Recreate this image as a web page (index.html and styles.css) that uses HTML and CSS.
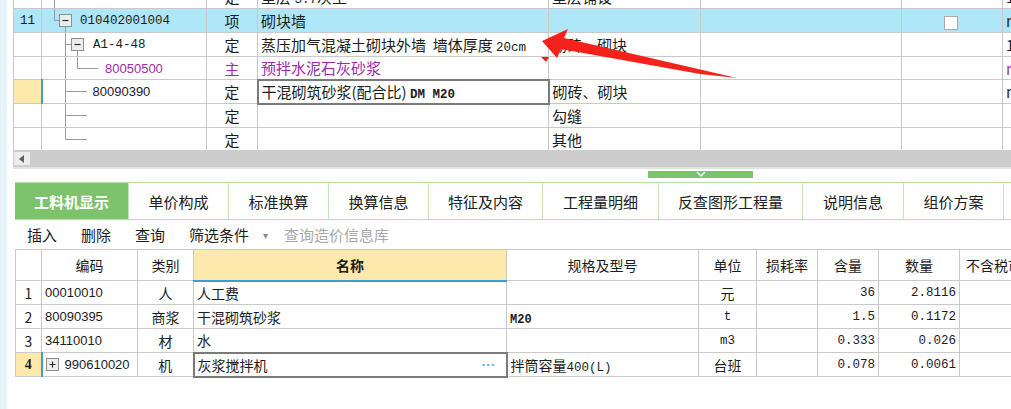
FILE: index.html
```html
<!DOCTYPE html>
<html lang="zh-CN">
<head>
<meta charset="utf-8">
<title>工料机显示</title>
<link rel="stylesheet" href="styles.css">
</head>
<body>
<div class="app">
  <div class="edge"></div>
  <div class="main">
    <div class="upper">
      <table class="grid top">
        <colgroup>
          <col class="t1"><col class="t2"><col class="t3"><col class="t4"><col class="t5"><col class="t6"><col class="t7"><col class="t8">
        </colgroup>
        <tr class="r24">
          <td class="num"></td>
          <td class="tree"><div class="tr"><svg width="51" height="23"><path class="ln" d="M12.5 0V23"/></svg><span class="mono">A1-4-125</span></div></td>
          <td class="c">定</td>
          <td>垫层 <span class="mono">3:7</span>灰土</td>
          <td>垫层铺设</td>
          <td></td><td></td>
          <td class="last">1</td>
        </tr>
        <tr class="r24 sel">
          <td class="num c mono">11</td>
          <td class="tree"><div class="tr"><svg width="38" height="23"><path class="ln" d="M12.5 0V11.5H17.5M23.5 17.5V23"/><rect class="bx" x="17.5" y="5.5" width="12" height="12"/><path class="mk" d="M20.5 11.5H26.5"/></svg><span class="mono">010402001004</span></div></td>
          <td class="c">项</td>
          <td>砌块墙</td>
          <td></td><td></td>
          <td class="c"><span class="chk"></span></td>
          <td class="last">m</td>
        </tr>
        <tr class="r24">
          <td class="num"></td>
          <td class="tree"><div class="tr"><svg width="51" height="23"><path class="ln" d="M23.5 0V23M23.5 11.5H29.5M35.5 17.5V23"/><rect class="bx" x="29.5" y="5.5" width="12" height="12"/><path class="mk" d="M32.5 11.5H38.5"/></svg><span class="mono">A1-4-48</span></div></td>
          <td class="c">定</td>
          <td>蒸压加气混凝土砌块外墙&nbsp; 墙体厚度 <span class="mono">20cm</span></td>
          <td>砌砖、砌块</td>
          <td></td><td></td>
          <td class="last">1</td>
        </tr>
        <tr class="r23 purple">
          <td class="num"></td>
          <td class="tree"><div class="tr"><svg width="63" height="22"><path class="ln" d="M23.5 0V22M35.5 0V11.5H56"/></svg><span class="sans">80050500</span></div></td>
          <td class="c">主</td>
          <td>预拌水泥石灰砂浆</td>
          <td></td><td></td><td></td>
          <td class="last">m</td>
        </tr>
        <tr class="r24">
          <td class="num cur"></td>
          <td class="tree bar"><div class="tr"><svg width="50" height="23"><path class="ln" d="M22.5 0V23M22.5 11.5H44"/></svg><span class="sans">80090390</span></div></td>
          <td class="c">定</td>
          <td class="edit">干混砌筑砂浆(配合比) <span class="mono b">DM M20</span></td>
          <td>砌砖、砌块</td>
          <td></td><td></td>
          <td class="last">m</td>
        </tr>
        <tr class="r24">
          <td class="num"></td>
          <td class="tree"><div class="tr"><svg width="51" height="23"><path class="ln" d="M23.5 0V23M23.5 11.5H45"/></svg></div></td>
          <td class="c">定</td>
          <td></td>
          <td>勾缝</td>
          <td></td><td></td><td class="last"></td>
        </tr>
        <tr class="r23">
          <td class="num"></td>
          <td class="tree"><div class="tr"><svg width="51" height="22"><path class="ln" d="M23.5 0V11.5H45"/></svg></div></td>
          <td class="c">定</td>
          <td></td>
          <td>其他</td>
          <td></td><td></td><td class="last"></td>
        </tr>
      </table>
    </div>

    <div class="hscroll"><div class="hs-btn"><svg width="6" height="8"><path d="M5 0V8L0 4Z" fill="#606060"/></svg></div></div>

    <div class="splitter">
      <div class="grip"><svg width="10" height="6"><path d="M1 1L5 5L9 1" fill="none" stroke="#fff" stroke-width="1.4"/></svg></div>
    </div>

    <div class="tabs">
      <div class="tab active w114">工料机显示</div>
      <div class="tab w100">单价构成</div>
      <div class="tab w100">标准换算</div>
      <div class="tab w100">换算信息</div>
      <div class="tab w114">特征及内容</div>
      <div class="tab w116">工程量明细</div>
      <div class="tab w144">反查图形工程量</div>
      <div class="tab w101">说明信息</div>
      <div class="tab w100">组价方案</div>
      <div class="tab-rest"></div>
    </div>

    <div class="toolbar">
      <span class="tb">插入</span>
      <span class="tb">删除</span>
      <span class="tb">查询</span>
      <span class="tb">筛选条件</span>
      <span class="drop">▾</span>
      <span class="tb dis">查询造价信息库</span>
    </div>

    <table class="grid bottom">
      <colgroup>
        <col class="b1"><col class="b2"><col class="b3"><col class="b4"><col class="b5"><col class="b6"><col class="b7"><col class="b8"><col class="b9"><col class="b10">
      </colgroup>
      <tr class="head">
        <th></th><th>编码</th><th>类别</th><th class="hl">名称</th><th>规格及型号</th><th>单位</th><th>损耗率</th><th>含量</th><th>数量</th><th class="lft">不含税市场价</th>
      </tr>
      <tr>
        <td class="c">1</td><td class="sans">00010010</td><td class="c">人</td><td>人工费</td><td></td><td class="c">元</td><td></td><td class="r mono">36</td><td class="r mono">2.8116</td><td></td>
      </tr>
      <tr>
        <td class="c">2</td><td class="sans">80090395</td><td class="c">商浆</td><td>干混砌筑砂浆</td><td class="spec"><span class="mono b">M20</span></td><td class="c mono">t</td><td></td><td class="r mono">1.5</td><td class="r mono">0.1172</td><td></td>
      </tr>
      <tr>
        <td class="c">3</td><td class="sans">34110010</td><td class="c">材</td><td>水</td><td></td><td class="c mono">m3</td><td></td><td class="r mono">0.333</td><td class="r mono">0.026</td><td></td>
      </tr>
      <tr>
        <td class="c cur bold4">4</td>
        <td class="bar"><div class="code"><svg width="22" height="14"><rect class="bx" x="3.5" y="0.5" width="12" height="12"/><path class="mk" d="M6.5 6.5H12.5M9.5 3.5V9.5"/></svg><span class="sans">990610020</span></div></td>
        <td class="c">机</td>
        <td class="edit"><div class="ed"><span>灰浆搅拌机</span><span class="dots">...</span></div></td>
        <td>拌筒容量<span class="mono">400(L)</span></td>
        <td class="c">台班</td><td></td>
        <td class="r mono">0.078</td><td class="r mono">0.0061</td><td></td>
      </tr>
    </table>
  </div>

  <svg class="overlay" width="1011" height="409">
    <polygon points="541,57 549,57 546,62" fill="#ee1d1d"/>
    <polygon points="542,41 568,29 564,38 737,78 700,74 561,49 557,58" fill="#f5221b"/>
  </svg>
</div>
</body>
</html>
```

FILE: styles.css
```css
* { box-sizing: border-box; }
html, body { margin: 0; padding: 0; }
body {
  width: 1011px;
  height: 409px;
  overflow: hidden;
  background: #fff;
  color: #1c1c1c;
  font-family: "Noto Sans CJK SC", sans-serif;
}
.app { position: relative; display: flex; height: 409px; }
.edge { flex: none; width: 7px; background: #e7f3fa; }
.main {
  flex: 1;
  min-width: 0;
  margin-left: 6px;
  overflow: hidden;
  display: flex;
  flex-direction: column;
}

.mono { font-family: "Liberation Mono", "Noto Sans CJK SC", monospace; font-size: 12.5px; }
.sans { font-family: "Liberation Sans", sans-serif; font-size: 13px; }
.b { font-weight: bold; }

/* grids */
.grid { border-collapse: collapse; table-layout: fixed; }
.grid td, .grid th {
  border: 1px solid #c9c9c9;
  padding: 0 3px;
  white-space: nowrap;
  overflow: hidden;
  vertical-align: middle;
}
.c { text-align: center; }
.r { text-align: right; }

/* upper grid */
.upper { flex: none; height: 150px; overflow: hidden; }
.top { width: 1049px; margin-top: -16px; font-size: 15px; }
.t1 { width: 28px; } .t2 { width: 165px; } .t3 { width: 51px; } .t4 { width: 291px; }
.t5 { width: 152px; } .t6 { width: 201px; } .t7 { width: 101px; } .t8 { width: 60px; }
.top .r24 td { height: 24px; }
.top .r23 td { height: 23px; }
.top td.tree { padding: 0; }
.tr { display: flex; align-items: center; }
.tr svg { flex: none; display: block; }
.ln { stroke: #9a9a9a; stroke-width: 1; fill: none; }
.bx { fill: #ededed; stroke: #8e8e8e; stroke-width: 1; }
.mk { stroke: #2a2a2a; stroke-width: 1.2; fill: none; }
.sel td { background: #afe6f8; }
.purple td { color: #9a2ca8; }
.cur { background: #fde9ab; }
.grid td.bar { border-left: 2px solid #3a9fd6; }
.grid td.edit { border: 2px solid #7a7a7a; }
.chk {
  display: inline-block;
  width: 14px;
  height: 14px;
  background: #fff;
  border: 1px solid #a9a9a9;
  vertical-align: middle;
  margin-left: -2px;
}
.last { padding-left: 3px; }

/* scrollbar + splitter */
.hscroll {
  flex: none;
  height: 17px;
  background: #cdcdcd;
  padding: 2px 0 0 1px;
}
.hs-btn {
  width: 16px;
  height: 13px;
  background: #ececec;
  display: flex;
  align-items: center;
  justify-content: center;
}
.splitter {
  flex: none;
  height: 15px;
  border-top: 2px solid #e3e3e3;
  padding-top: 2px;
}
.grip {
  width: 105px;
  height: 7px;
  margin-left: 635px;
  background: #7dc36b;
  display: flex;
  justify-content: center;
  align-items: flex-start;
}
.grip svg { display: block; }

/* tabs */
.tabs {
  flex: none;
  display: flex;
  height: 38px;
  margin-left: 2px;
  border-top: 1px solid #b6e2a5;
  border-bottom: 1px solid #b6e2a5;
  font-size: 15px;
}
.tab {
  flex: none;
  display: flex;
  align-items: center;
  justify-content: center;
  border-right: 1px solid #c3e8b5;
  color: #202020;
}
.tab.active { background: #7dc36b; color: #fff; font-weight: bold; }
.tab-rest { flex: 1; }
.w114 { width: 114px; } .w100 { width: 100px; } .w116 { width: 116px; }
.w144 { width: 144px; } .w101 { width: 101px; }

/* toolbar */
.toolbar {
  flex: none;
  height: 29px;
  display: flex;
  align-items: center;
  padding-left: 14px;
  font-size: 15px;
  gap: 24px;
}
.drop { font-size: 10px; color: #8a8a8a; margin-left: -10px; }
.tb.dis { color: #a8a8a8; margin-left: -8px; }

/* bottom grid */
.bottom { width: 1064px; margin-left: 2px; font-size: 14px; }
.b1 { width: 26px; } .b2 { width: 96px; } .b3 { width: 56px; } .b4 { width: 313px; }
.b5 { width: 192px; } .b6 { width: 58px; } .b7 { width: 61px; } .b8 { width: 61px; }
.b9 { width: 81px; } .b10 { width: 120px; }
.bottom th { height: 31px; font-weight: normal; text-align: center; }
.bottom th.hl { background: #fde9ab; font-weight: bold; border-bottom: 2px solid #3a9fd6; }
.bottom th.lft { text-align: left; padding-left: 6px; }
.bottom td { height: 24px; }
.bottom td.r { padding-right: 3px; }
.bottom td.spec .mono { font-size: 12px; }
.bold4 { font-weight: bold; font-family: "Liberation Serif", serif; }
.code { display: flex; align-items: center; }
.code svg { flex: none; display: block; }
.bottom td.bar { padding: 0; }
.ed { display: flex; justify-content: space-between; align-items: center; }
.dots {
  color: #5ea6dc;
  font-family: "Liberation Sans", sans-serif;
  font-size: 13px;
  font-weight: bold;
  line-height: 1;
  padding: 0 7px 6px 0;
  letter-spacing: 1px;
}

.overlay { position: absolute; left: 0; top: 0; pointer-events: none; }
```
